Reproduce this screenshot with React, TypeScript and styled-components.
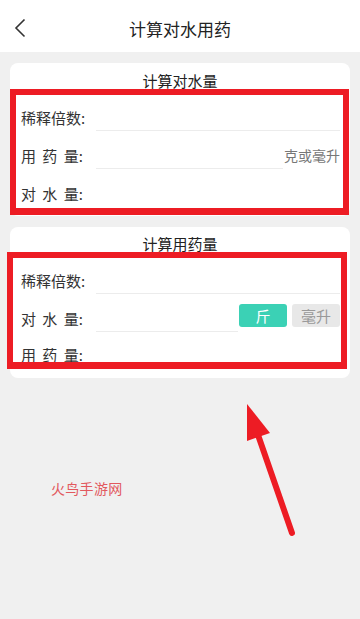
import React from 'react';
import styled, { createGlobalStyle } from 'styled-components';

const GlobalStyle = createGlobalStyle`
  html, body {
    margin: 0;
    padding: 0;
    background: #f0f0f0;
  }
  body {
    font-family: "Noto Sans CJK SC", "Noto Sans", sans-serif;
    color: #333;
  }
  * {
    box-sizing: border-box;
  }
`;

const Page = styled.div`
  position: relative;
  width: 360px;
  min-height: 619px;
  background: #f0f0f0;
  overflow: hidden;
`;

const Header = styled.header`
  position: relative;
  height: 52px;
  padding-top: 5px;
  background: #ffffff;
  display: flex;
  align-items: center;
  justify-content: center;
`;

const BackButton = styled.button`
  position: absolute;
  left: 10px;
  top: 17px;
  width: 20px;
  height: 22px;
  padding: 0;
  border: none;
  background: none;
  display: flex;
  align-items: center;
  justify-content: center;
`;

const Title = styled.h1`
  margin: 0;
  font-size: 17px;
  font-weight: 400;
  color: #222;
`;

const Content = styled.main`
  padding: 11px 10px 0;
  display: flex;
  flex-direction: column;
  gap: 11px;
`;

const Card = styled.section<{ $top: number; $bottom: number }>`
  position: relative;
  background: #ffffff;
  border-radius: 8px;
  padding: ${(p) => p.$top}px 0 ${(p) => p.$bottom}px;
`;

const CardTitle = styled.h2`
  margin: 0 0 7px;
  font-size: 15px;
  line-height: 20px;
  font-weight: 400;
  text-align: center;
  color: #222;
`;

const Row = styled.div<{ $height?: number }>`
  height: ${(p) => p.$height ?? 38}px;
  padding: 0 10px 0 11px;
  display: flex;
  align-items: center;
`;

const Label = styled.span`
  width: 75px;
  flex-shrink: 0;
  font-size: 15px;
  word-spacing: 3px;
  color: #333;
  white-space: pre;
`;

const Field = styled.input`
  flex: 1;
  min-width: 0;
  height: 28px;
  border: none;
  border-bottom: 1px solid #ececec;
  outline: none;
  background: transparent;
  font-size: 15px;
  font-family: inherit;
`;

const Unit = styled.span`
  margin-left: 1px;
  font-size: 14px;
  color: #777;
`;

const Toggle = styled.button<{ $active?: boolean }>`
  width: 48px;
  height: 23px;
  margin: 0 0 6px ${(p) => (p.$active ? 1 : 5)}px;
  padding: 0;
  border: none;
  border-radius: 3px;
  background: ${(p) => (p.$active ? '#3bd1b5' : '#e8e8e8')};
  color: ${(p) => (p.$active ? '#ffffff' : '#999999')};
  font-size: 15px;
  font-family: inherit;
  line-height: 23px;
`;

const Highlight = styled.div<{ $left: number; $top: number; $width: number; $height: number }>`
  position: absolute;
  left: ${(p) => p.$left}px;
  top: ${(p) => p.$top}px;
  width: ${(p) => p.$width}px;
  height: ${(p) => p.$height}px;
  border: 6px solid #ed1c24;
  border-bottom-width: 7px;
  pointer-events: none;
`;

const Watermark = styled.div`
  position: absolute;
  left: 51px;
  top: 478px;
  font-size: 14px;
  color: #e2595e;
  letter-spacing: 0.3px;
`;

const Arrow = styled.svg`
  position: absolute;
  left: 0;
  top: 0;
  pointer-events: none;
`;

const App = () => {
  return (
    <>
      <GlobalStyle />
      <Page>
        <Header>
          <BackButton aria-label="back">
            <svg width="12" height="20" viewBox="0 0 12 20">
              <path d="M10.5 1.5 L2 10 L10.5 18.5" fill="none" stroke="#333" strokeWidth="1.6" />
            </svg>
          </BackButton>
          <Title>计算对水用药</Title>
        </Header>

        <Content>
          <Card $top={8} $bottom={4}>
            <CardTitle>计算对水量</CardTitle>
            <Row>
              <Label>稀释倍数:</Label>
              <Field />
            </Row>
            <Row>
              <Label>用 药 量:</Label>
              <Field />
              <Unit>克或毫升</Unit>
            </Row>
            <Row>
              <Label>对 水 量:</Label>
            </Row>
            <Highlight $left={0} $top={26} $width={339} $height={126} />
          </Card>

          <Card $top={7} $bottom={7}>
            <CardTitle>计算用药量</CardTitle>
            <Row>
              <Label>稀释倍数:</Label>
              <Field />
            </Row>
            <Row>
              <Label>对 水 量:</Label>
              <Field />
              <Toggle $active>斤</Toggle>
              <Toggle>毫升</Toggle>
            </Row>
            <Row $height={34}>
              <Label>用 药 量:</Label>
            </Row>
            <Highlight $left={-3} $top={25} $width={340} $height={117} />
          </Card>
        </Content>

        <Watermark>火鸟手游网</Watermark>

        <Arrow width="360" height="619" viewBox="0 0 360 619">
          <line x1="292" y1="533" x2="257" y2="432" stroke="#ed1c24" strokeWidth="6" strokeLinecap="round" />
          <polygon points="247,404 247,441 270,433" fill="#ed1c24" />
        </Arrow>
      </Page>
    </>
  );
};

export default App;
